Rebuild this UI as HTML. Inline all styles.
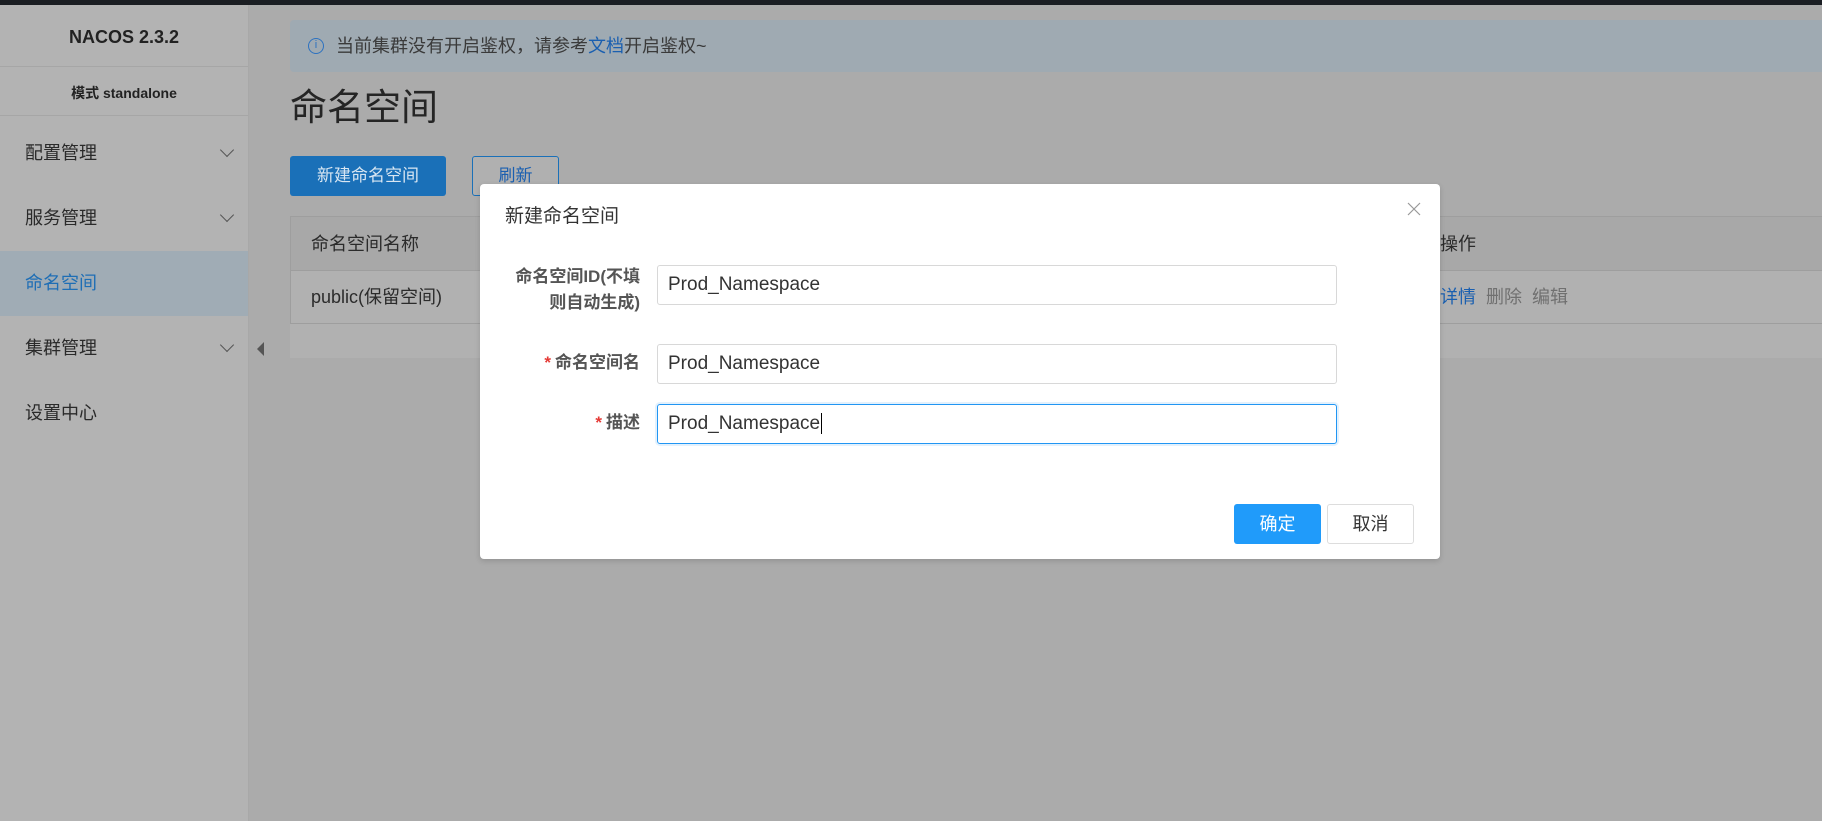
<!DOCTYPE html>
<html><head><meta charset="utf-8"><style>
*{box-sizing:border-box;margin:0;padding:0}
body{width:1822px;height:821px;overflow:hidden;position:relative;background:#ababab;font-family:"Liberation Sans","Noto Sans CJK SC",sans-serif;color:#2b2b2b}
.top{position:absolute;left:0;top:0;width:1822px;height:5px;background:#1b1e23}
.side{position:absolute;left:0;top:5px;width:249px;height:816px;background:#b3b3b3;border-right:1px solid #a8a8a8}
.logo{height:62px;border-bottom:1px solid #a6a6a6;text-align:center;font-weight:bold;font-size:18px;line-height:64px;color:#222}
.mode{height:49px;border-bottom:1px solid #a6a6a6;text-align:center;font-weight:bold;font-size:14px;line-height:52px;color:#222}
.menu{padding-top:5px}
.mi{height:65px;line-height:65px;padding-left:25px;font-size:18px;color:#2a2a2a;position:relative}
.mi.act{background:#a0acb5;color:#1e6eb5}
.chev{position:absolute;right:16px;top:24px;width:10px;height:10px;border-right:1.3px solid #555;border-bottom:1.3px solid #555;transform:rotate(45deg)}
.main{position:absolute;left:250px;top:5px;right:0;bottom:0}
.notice{position:absolute;left:40px;top:15px;right:0;height:52px;background:#9faab2;border-radius:4px 0 0 4px;font-size:18px;line-height:52px;padding-left:46px;color:#3a3a3a}
.notice a{color:#1a5fb0;text-decoration:none}
.ic{position:absolute;left:18px;top:18px;width:16px;height:16px;border:1.3px solid #2d72c0;border-radius:50%;font-size:11px;line-height:13px;text-align:center;color:#2d72c0}
h1{position:absolute;left:40px;top:72px;font-size:37px;font-weight:normal;color:#252525}
.b1{position:absolute;left:40px;top:151px;width:156px;height:40px;background:#1a70b8;color:#d8e6f2;border-radius:3px;font-size:17px;line-height:40px;text-align:center}
.b2{position:absolute;left:222px;top:151px;width:87px;height:40px;border:1px solid #1a70b8;color:#1a5fb0;border-radius:3px;font-size:17px;line-height:38px;text-align:center;background:#b0b0b0}
.tbl{position:absolute;left:40px;top:211px;right:0;height:142px;background:#b1b1b1}
.th{height:55px;background:#a8a8a8;border:1px solid #9e9e9e;border-right:none;font-size:18px;line-height:55px;padding-left:20px;position:relative}
.tr{height:53px;border-bottom:1px solid #9e9e9e;border-left:1px solid #9e9e9e;font-size:18px;line-height:53px;padding-left:20px;position:relative}
.ops{position:absolute;left:1149px;top:0;}
.tri{position:absolute;left:7px;top:337px;width:0;height:0;border-top:7px solid transparent;border-bottom:7px solid transparent;border-right:7px solid #555}
.dlg{position:absolute;left:480px;top:184px;width:960px;height:375px;background:#fff;border-radius:4px;box-shadow:0 2px 6px rgba(0,0,0,.15)}
.dt{position:absolute;left:25px;top:17px;font-size:19px;color:#333}
.x{position:absolute;left:926px;top:17px;width:16px;height:16px}
.lbl{position:absolute;right:800px;text-align:right;font-size:17px;font-weight:bold;color:#555;line-height:26px}
.lbl i{color:#e53935;font-style:normal;margin-right:4px}
.inp{position:absolute;left:177px;width:680px;height:40px;border:1px solid #d8d8d8;border-radius:3px;font-size:19px;line-height:38px;padding-left:10px;color:#333}
.inp.f{border-color:#2196f3;box-shadow:0 0 0 2px #e3f1fd}
.ok{position:absolute;left:754px;top:320px;width:87px;height:40px;background:#209bfa;color:#fff;border-radius:3px;text-align:center;line-height:40px;font-size:18px}
.cc{position:absolute;left:847px;top:320px;width:87px;height:40px;border:1px solid #ddd;color:#333;border-radius:3px;text-align:center;line-height:38px;font-size:18px}
</style></head><body>
<div class="top"></div>
<div class="side">
<div class="logo">NACOS 2.3.2</div>
<div class="mode">模式 standalone</div>
<div class="menu">
<div class="mi">配置管理<span class="chev"></span></div>
<div class="mi">服务管理<span class="chev"></span></div>
<div class="mi act">命名空间</div>
<div class="mi">集群管理<span class="chev"></span></div>
<div class="mi">设置中心</div>
</div>
</div>
<div class="main">
<div class="notice"><span class="ic">i</span>当前集群没有开启鉴权，请参考<a>文档</a>开启鉴权~</div>
<h1>命名空间</h1>
<div class="b1">新建命名空间</div>
<div class="b2">刷新</div>
<div class="tbl">
<div class="th">命名空间名称<span class="ops" style="color:#2b2b2b">操作</span></div>
<div class="tr">public(保留空间)<span class="ops"><span style="color:#1a5fb0">详情</span>&nbsp; <span style="color:#707070">删除</span>&nbsp; <span style="color:#707070">编辑</span></span></div>
</div>
<div class="tri"></div>
</div>
<div class="dlg">
<div class="dt">新建命名空间</div>
<svg class="x" viewBox="0 0 16 16"><path d="M2 2L14 14M14 2L2 14" stroke="#999" stroke-width="1.2" fill="none"/></svg>
<div class="lbl" style="top:80px;width:160px;">命名空间ID(不填<br>则自动生成)</div>
<div class="inp" style="top:81px">Prod_Namespace</div>
<div class="lbl" style="top:166px"><i>*</i>命名空间名</div>
<div class="inp" style="top:160px">Prod_Namespace</div>
<div class="lbl" style="top:226px"><i>*</i>描述</div>
<div class="inp f" style="top:220px">Prod_Namespace<span style="border-left:1px solid #000;margin-left:1px"></span></div>
<div class="ok">确定</div>
<div class="cc">取消</div>
</div>
</body></html>
